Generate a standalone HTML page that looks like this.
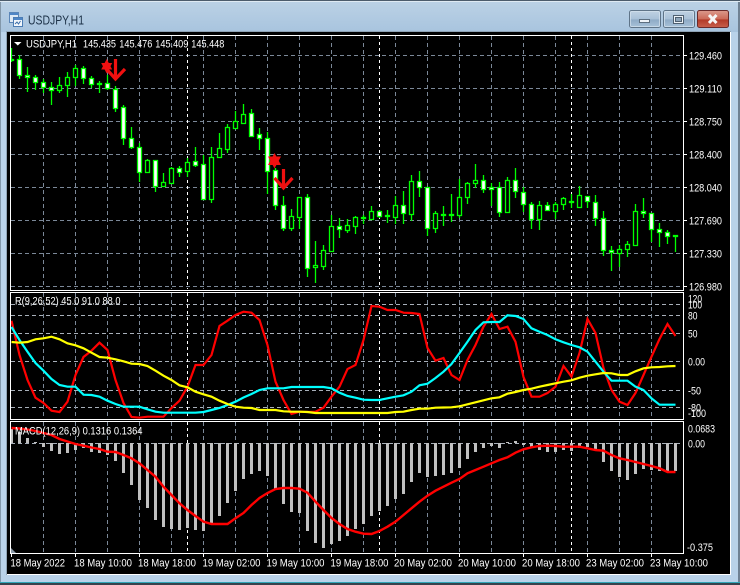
<!DOCTYPE html>
<html lang="en"><head><meta charset="utf-8"><title>USDJPY,H1</title>
<style>
html,body{margin:0;padding:0;background:#fff;width:740px;height:585px;overflow:hidden}
svg{display:block}
text{font-family:"Liberation Sans",sans-serif;font-size:11px;fill:#fff}
.t{font-size:13px;fill:#1c3147}
</style></head><body>
<svg width="740" height="585" viewBox="0 0 740 585" xmlns="http://www.w3.org/2000/svg">
<defs>
<linearGradient id="tb" x1="0" y1="0" x2="0" y2="1"><stop offset="0" stop-color="#bcd2e6"/><stop offset="1" stop-color="#a8c4de"/></linearGradient>
<linearGradient id="btn" x1="0" y1="0" x2="0" y2="1"><stop offset="0" stop-color="#c0d2e3"/><stop offset=".5" stop-color="#a9c1d8"/><stop offset=".55" stop-color="#8fabc6"/><stop offset="1" stop-color="#a9c3da"/></linearGradient>
<linearGradient id="cls" x1="0" y1="0" x2="0" y2="1"><stop offset="0" stop-color="#dc9a8c"/><stop offset=".5" stop-color="#cc6a58"/><stop offset=".55" stop-color="#b23a28"/><stop offset="1" stop-color="#c8604c"/></linearGradient>
</defs>
<rect width="740" height="585" fill="#b9d2e9"/>
<rect width="740" height="32" fill="url(#tb)"/>
<rect width="740" height="1" fill="#4c5c6c"/>
<rect y="1" width="740" height="1" fill="#dfeaf3"/>
<rect x="0" y="582" width="740" height="1" fill="#2fa6b8"/>
<rect x="0" y="583" width="740" height="2" fill="#39424c"/>
<rect x="738" y="2" width="2" height="580" fill="#6f8193"/>
<rect x="0" y="2" width="1" height="580" fill="#8398aa"/>

<!-- title icon -->
<rect x="9.500" y="12.500" width="9" height="10" fill="#dfeaf5" stroke="#5b86b8"/>
<rect x="10" y="13" width="8" height="2" fill="#4f86c6"/>
<rect x="13.500" y="17.500" width="9" height="9" fill="#f2f7fc" stroke="#4b7cb4"/>
<rect x="14" y="18" width="8" height="2" fill="#4f86c6"/>
<path d="M15 24l2-2 1.500 2 2-3" fill="none" stroke="#3b6ea8"/>
<text class="t" x="28" y="24.500" textLength="56" lengthAdjust="spacingAndGlyphs">USDJPY,H1</text>

<!-- buttons -->
<rect x="629.500" y="10.500" width="31" height="17" rx="2" fill="url(#btn)" stroke="#5f7488"/>
<rect x="630.500" y="11.500" width="29" height="15" rx="1" fill="none" stroke="#d6e3ee" stroke-opacity=".7"/>
<rect x="639.500" y="19.500" width="10" height="3" fill="#eef3f8" stroke="#5d6f80"/>
<rect x="663.500" y="10.500" width="31" height="17" rx="2" fill="url(#btn)" stroke="#5f7488"/>
<rect x="664.500" y="11.500" width="29" height="15" rx="1" fill="none" stroke="#d6e3ee" stroke-opacity=".7"/>
<rect x="673.500" y="15.500" width="10" height="8" fill="#eef3f8" stroke="#4f6070"/>
<rect x="675.500" y="17.500" width="6" height="4" fill="#8ea5ba" stroke="#4f6070"/>
<rect x="697.500" y="10.500" width="31" height="17" rx="2" fill="url(#cls)" stroke="#6a2a2a"/>
<path d="M709 15l7.500 8M716.500 15l-7.500 8" stroke="#f5f5f5" stroke-width="3" fill="none"/>

<!-- client area -->
<rect x="6" y="31" width="725" height="544" fill="#8fa3b5"/>
<rect x="7" y="32" width="723" height="542" fill="#000"/>
<rect x="730" y="32" width="1" height="543" fill="#fff"/>
<rect x="7" y="574" width="724" height="1" fill="#fff"/>

<!-- horizontal grids -->
<g fill="none" stroke="#7b8898" stroke-dasharray="4 3">
<path d="M11 55.500H683M11 88.500H683M11 121.500H683M11 154.500H683M11 187.500H683M11 220.500H683M11 253.500H683M11 286.500H683"/>
</g>
<g fill="none" stroke="#a8b0ba" stroke-dasharray="4 3">
<path d="M11 304.500H683M11 315.500H683M11 333.500H683M11 361.500H683M11 390.500H683M11 407.500H683M11 443.500H683"/>
</g>
<!-- vertical grids -->
<g fill="none" stroke="#7b8898" stroke-dasharray="4 3">
<path d="M43.500 36V289M75.500 36V289M107.500 36V289M139.500 36V289M171.500 36V289M203.500 36V289M235.500 36V289M267.500 36V289M299.500 36V289M331.500 36V289M363.500 36V289M395.500 36V289M427.500 36V289M459.500 36V289M491.500 36V289M523.500 36V289M555.500 36V289M587.500 36V289M619.500 36V289M651.500 36V289"/>
<path d="M43.500 293V418M75.500 293V418M107.500 293V418M139.500 293V418M171.500 293V418M203.500 293V418M235.500 293V418M267.500 293V418M299.500 293V418M331.500 293V418M363.500 293V418M395.500 293V418M427.500 293V418M459.500 293V418M491.500 293V418M523.500 293V418M555.500 293V418M587.500 293V418M619.500 293V418M651.500 293V418"/>
<path d="M43.500 422V552M75.500 422V552M107.500 422V552M139.500 422V552M171.500 422V552M203.500 422V552M235.500 422V552M267.500 422V552M299.500 422V552M331.500 422V552M363.500 422V552M395.500 422V552M427.500 422V552M459.500 422V552M491.500 422V552M523.500 422V552M555.500 422V552M587.500 422V552M619.500 422V552M651.500 422V552"/>
</g>
<g fill="none" stroke="#fff" stroke-dasharray="3 3">
<path d="M187.500 36V289M379.500 36V289M571.500 36V289M187.500 293V418M379.500 293V418M571.500 293V418M187.500 422V552M379.500 422V552M571.500 422V552"/>
</g>

<!-- wicks -->
<path fill="none" stroke="#00ff00" stroke-width="1.300" d="M11.500 48V62M19.500 55V79M27.500 67V92M35.500 75V90M43.500 79V93M51.500 82V105M59.500 77V93M67.500 72V97M75.500 65V86M83.500 66V84M91.500 76V88M99.500 81V93M107.500 75V90M115.500 86V112M123.500 105V145M131.500 127V149M139.500 143V182M147.500 159V172M155.500 160V192M163.500 173V186M171.500 167V183M179.500 166V177M187.500 158V177M195.500 147V167M203.500 155V200M211.500 147V203M219.500 133V158M227.500 124V153M235.500 111V128M243.500 104V124M251.500 109V137M259.500 128V150M267.500 132V194M275.500 168V210M283.500 196V231M291.500 209V231M299.500 197V229M307.500 194V277M315.500 241V283M323.500 245V270M331.500 215V251M339.500 218V238M347.500 219V233M355.500 216V234M363.500 215V224M371.500 206V219M379.500 210V218M387.500 210V223M395.500 196V224M403.500 191V224M411.500 175V221M419.500 171V197M427.500 187V236M435.500 211V233M443.500 206V226M451.500 194V222M459.500 179V218M467.500 182V204M475.500 164V188M483.500 175V193M491.500 183V206M499.500 182V217M507.500 177V213M515.500 168V198M523.500 187V212M531.500 202V229M539.500 201V230M547.500 202V211M555.500 202V219M563.500 197V210M571.500 194V208M579.500 186V207M587.500 196V208M595.500 195V226M603.500 211V256M611.500 246V271M619.500 245V267M627.500 241V257M635.500 204V246M643.500 198V218M651.500 213V242M659.500 223V247M667.500 230V244M675.500 235V252"/>
<!-- bull bodies -->
<path fill="#000" stroke="#00ff00" stroke-width="1.300" d="M57.500 85.500h4v5h-4zM65.500 77.500h4v8h-4zM73.500 68.500h4v9h-4zM145.500 160.500h4v12h-4zM161.500 182.500h4v4h-4zM169.500 168.500h4v15h-4zM185.500 162.500h4v9h-4zM209.500 157.500h4v42h-4zM217.500 148.500h4v9h-4zM225.500 127.500h4v22h-4zM233.500 121.500h4v7h-4zM241.500 114.500h4v9h-4zM289.500 216.500h4v12h-4zM297.500 197.500h4v20h-4zM313.500 265.500h4v2h-4zM321.500 250.500h4v16h-4zM329.500 226.500h4v25h-4zM345.500 225.500h4v5h-4zM353.500 217.500h4v9h-4zM369.500 211.500h4v8h-4zM393.500 205.500h4v12h-4zM409.500 181.500h4v33h-4zM433.500 213.500h4v15h-4zM457.500 197.500h4v18h-4zM465.500 183.500h4v14h-4zM473.500 180.500h4v3h-4zM505.500 180.500h4v32h-4zM537.500 205.500h4v14h-4zM553.500 204.500h4v7h-4zM561.500 198.500h4v6h-4zM577.500 195.500h4v12h-4zM617.500 249.500h4v4h-4zM625.500 244.500h4v5h-4zM633.500 211.500h4v34h-4z"/>
<!-- bear bodies -->
<path fill="#fff" stroke="#00ff00" stroke-width="1.300" d="M11.500 59.500h2v1h-2zM17.500 59.500h4v16h-4zM25.500 75.500h4v2h-4zM33.500 77.500h4v5h-4zM41.500 82.500h4v5h-4zM49.500 87.500h4v3h-4zM81.500 68.500h4v10h-4zM89.500 78.500h4v6h-4zM97.500 83.500h4v1h-4zM105.500 83.500h4v5h-4zM113.500 89.500h4v19h-4zM121.500 107.500h4v31h-4zM129.500 138.500h4v9h-4zM137.500 147.500h4v25h-4zM153.500 160.500h4v26h-4zM177.500 168.500h4v4h-4zM193.500 161.500h4v4h-4zM201.500 164.500h4v35h-4zM249.500 113.500h4v23h-4zM257.500 134.500h4v4h-4zM265.500 138.500h4v33h-4zM273.500 170.500h4v35h-4zM281.500 205.500h4v23h-4zM305.500 197.500h4v71h-4zM337.500 226.500h4v3h-4zM361.500 217.500h4v1h-4zM377.500 211.500h4v5h-4zM385.500 215.500h4v1h-4zM401.500 205.500h4v8h-4zM417.500 181.500h4v6h-4zM425.500 187.500h4v41h-4zM441.500 214.500h4v1h-4zM449.500 214.500h4v1h-4zM481.500 180.500h4v9h-4zM489.500 187.500h4v2h-4zM497.500 187.500h4v25h-4zM513.500 180.500h4v11h-4zM521.500 192.500h4v12h-4zM529.500 204.500h4v15h-4zM545.500 205.500h4v5h-4zM569.500 201.500h4v1h-4zM585.500 196.500h4v5h-4zM593.500 202.500h4v16h-4zM601.500 218.500h4v32h-4zM609.500 250.500h4v2h-4zM641.500 211.500h4v2h-4zM649.500 213.500h4v16h-4zM657.500 229.500h4v3h-4zM665.500 232.500h4v4h-4zM673.500 235.500h4v1h-4z"/>

<!-- red markers -->
<g fill="#f01010">
<polygon points="106.700,59 112.200,69.500 101.200,69.500"/><polygon points="106.700,73.500 112.200,63 101.200,63"/>
<polygon points="274.500,153 281,165 268,165"/><polygon points="274.500,168.500 281,156.500 268,156.500"/>
</g>
<g fill="none" stroke="#f01010" stroke-width="3.200">
<path d="M115.500 59V79M106.500 69L115.500 79L125 69"/>
<path d="M283.500 169V188M274.500 178L283.500 188L292.500 178"/>
</g>

<!-- histogram -->
<path fill="none" stroke="#c0c0c0" stroke-width="3" d="M11.500 443V429M19.500 443V432M27.500 443V438M35.500 443V442M43.500 443V447M51.500 443V451M59.500 443V454M67.500 443V453M75.500 443V450M83.500 443V448M91.500 443V452M99.500 443V453M107.500 443V455M115.500 443V461M123.500 443V473M131.500 443V485M139.500 443V500M147.500 443V508M155.500 443V520M163.500 443V527M171.500 443V529M179.500 443V530M187.500 443V528M195.500 443V530M203.500 443V531M211.500 443V524M219.500 443V516M227.500 443V503M235.500 443V491M243.500 443V479M251.500 443V474M259.500 443V471M267.500 443V476M275.500 443V489M283.500 443V504M291.500 443V512M299.500 443V513M307.500 443V531M315.500 443V543M323.500 443V548M331.500 443V544M339.500 443V541M347.500 443V536M355.500 443V529M363.500 443V524M371.500 443V516M379.500 443V511M387.500 443V506M395.500 443V499M403.500 443V494M411.500 443V482M419.500 443V473M427.500 443V477M435.500 443V476M443.500 443V475M451.500 443V473M459.500 443V468M467.500 443V459M475.500 443V452M483.500 443V448M491.500 443V446M499.500 443V448M507.500 443V442M515.500 443V441M523.500 443V445M531.500 443V447M539.500 443V450M547.500 443V452M555.500 443V452M563.500 443V450M571.500 443V451M579.500 443V448M587.500 443V447M595.500 443V450M603.500 443V462M611.500 443V471M619.500 443V477M627.500 443V480M635.500 443V474M643.500 443V469M651.500 443V470M659.500 443V471M667.500 443V472M675.500 443V471"/>
<polygon points="11,548 11,553 16,553" fill="#8a99a8"/>

<!-- signal line -->
<polyline fill="none" stroke="#ff0000" stroke-width="2.400" points="11.500,428 19.500,428.500 27.500,429.500 35.500,431 43.500,433 51.500,435 59.500,439 67.500,441.500 75.500,444 83.500,445.700 91.500,447.500 99.500,449 107.500,451.700 115.500,452 123.500,455 131.500,458.300 139.500,463.300 147.500,470 155.500,476.700 163.500,486.700 171.500,495 179.500,503.300 187.500,510 195.500,516 203.500,521.700 211.500,524 219.500,524 227.500,524 235.500,518.300 243.500,513 251.500,505 259.500,498 267.500,493 275.500,489 283.500,488 291.500,488 299.500,488.700 307.500,492.700 315.500,501.700 323.500,510 331.500,518 339.500,524 347.500,529 355.500,531.700 363.500,533.700 371.500,534 379.500,531 387.500,526.700 395.500,521.700 403.500,515 411.500,508.300 419.500,501.700 427.500,495.700 435.500,490.700 443.500,486.700 451.500,482.700 459.500,479 467.500,473.300 475.500,470 483.500,466.700 491.500,463.300 499.500,460 507.500,457.300 515.500,452.700 523.500,449.300 531.500,447.300 539.500,446 547.500,445.700 555.500,446 563.500,446.700 571.500,446.700 579.500,446.700 587.500,448.300 595.500,450 603.500,450.700 611.500,455 619.500,458.300 627.500,460 635.500,462 643.500,464 651.500,466 659.500,468.300 667.500,472 675.500,472"/>

<!-- indicator lines -->
<polyline fill="none" stroke="#ff0000" stroke-width="2.200" points="11.500,320.700 19.500,355 27.500,380 35.500,397.700 43.500,403 51.500,410.700 59.500,412 67.500,401.700 75.500,375 83.500,357 91.500,350.700 99.500,342.700 107.500,350 115.500,380 123.500,403 131.500,417 139.500,417.700 147.500,416.700 155.500,416.700 163.500,416.700 171.500,408 179.500,400.700 187.500,386.700 195.500,365 203.500,365 211.500,355 219.500,326 227.500,320.700 235.500,315 243.500,311.700 251.500,312.700 259.500,320 267.500,345 275.500,381.700 283.500,400 291.500,414 299.500,411.700 307.500,412 315.500,411.700 323.500,407.700 331.500,396.700 339.500,386.700 347.500,369 355.500,365 363.500,340 371.500,306 379.500,306.700 387.500,310 395.500,310 403.500,312.700 411.500,313 419.500,314 427.500,348 435.500,360.700 443.500,358 451.500,375 459.500,380 467.500,360 475.500,345 483.500,326.700 491.500,314 499.500,329 507.500,326.700 515.500,341.700 523.500,377 531.500,396.700 539.500,396.700 547.500,393 555.500,386.700 563.500,366 571.500,376.700 579.500,353 587.500,319 595.500,333 603.500,368 611.500,390 619.500,401.700 627.500,405 635.500,393 643.500,375 651.500,356.700 659.500,339 667.500,324 675.500,336"/>
<polyline fill="none" stroke="#00ffff" stroke-width="2.200" points="11.500,327 19.500,340 27.500,351.700 35.500,363 43.500,370.700 51.500,379 59.500,385 67.500,386.700 75.500,386.700 83.500,394.700 91.500,395 99.500,396.700 107.500,400.700 115.500,404 123.500,406.700 131.500,406.700 139.500,406.700 147.500,409.300 155.500,411.700 163.500,412.700 171.500,412.700 179.500,412.700 187.500,412.700 195.500,412.700 203.500,412 211.500,410 219.500,408 227.500,405 235.500,401.700 243.500,397.500 251.500,394 259.500,390 267.500,388.300 275.500,388.300 283.500,388.300 291.500,387 299.500,387 307.500,387 315.500,387 323.500,387 331.500,388.300 339.500,392.700 347.500,396 355.500,397.700 363.500,399.700 371.500,400 379.500,400 387.500,398.300 395.500,396.700 403.500,395.300 411.500,391.700 419.500,385.300 427.500,383.700 435.500,378 443.500,371.700 451.500,364 459.500,353 467.500,341.700 475.500,330 483.500,322.300 491.500,322 499.500,322 507.500,315.300 515.500,316 523.500,319 531.500,328.300 539.500,331.700 547.500,335 555.500,339.300 563.500,342.300 571.500,345 579.500,347.300 587.500,351.700 595.500,361.700 603.500,371.700 611.500,380.700 619.500,380.700 627.500,380.700 635.500,386.700 643.500,390 651.500,398.300 659.500,404.700 667.500,404.700 675.500,404.700"/>
<polyline fill="none" stroke="#ffff00" stroke-width="2.200" points="11.500,342 19.500,342.700 27.500,342 35.500,339.300 43.500,338.300 51.500,336.700 59.500,339.300 67.500,343.300 75.500,345.300 83.500,348.300 91.500,352.700 99.500,357 107.500,357.700 115.500,359.300 123.500,361.300 131.500,363.700 139.500,364 147.500,366 155.500,370.700 163.500,375.700 171.500,380 179.500,385.300 187.500,387.300 195.500,391.700 203.500,394.300 211.500,396.700 219.500,400.700 227.500,404 235.500,406.700 243.500,407.700 251.500,408 259.500,410 267.500,410 275.500,410 283.500,411.300 291.500,411.700 299.500,411.700 307.500,412 315.500,413 323.500,413 331.500,413 339.500,413 347.500,413 355.500,413 363.500,413 371.500,413 379.500,413 387.500,413 395.500,412 403.500,411.700 411.500,410 419.500,408.700 427.500,408.700 435.500,407.700 443.500,407.500 451.500,407.300 459.500,406.300 467.500,404.300 475.500,402.300 483.500,400.300 491.500,398.300 499.500,397.300 507.500,393.700 515.500,392 523.500,390 531.500,388.700 539.500,386.700 547.500,385 555.500,383.300 563.500,381.700 571.500,380.300 579.500,377.700 587.500,375.700 595.500,374.300 603.500,373 611.500,373.300 619.500,375 627.500,375 635.500,371.300 643.500,368.300 651.500,367.300 659.500,367 667.500,366.300 675.500,366"/>

<!-- cover overshoot outside panels -->
<rect x="8" y="36" width="3" height="517" fill="#000"/>

<!-- frames -->
<g fill="none" stroke="#fff">
<rect x="10.500" y="35.500" width="673" height="255"/>
<rect x="10.500" y="292.500" width="673" height="127"/>
<rect x="10.500" y="421.500" width="673" height="132"/>
<path d="M683 55.500h4M683 88.500h4M683 121.500h4M683 154.500h4M683 187.500h4M683 220.500h4M683 253.500h4M683 286.500h4"/>
<path d="M11.500 553v4M75.500 553v4M139.500 553v4M203.500 553v4M267.500 553v4M331.500 553v4M395.500 553v4M459.500 553v4M523.500 553v4M587.500 553v4M651.500 553v4"/>
</g>

<!-- header text -->
<polygon points="14,42 21.500,42 17.800,45.500" fill="#fff"/>
<text x="26" y="47.500" textLength="51" lengthAdjust="spacingAndGlyphs">USDJPY,H1</text>
<text x="83" y="47.500" textLength="33" lengthAdjust="spacingAndGlyphs">145.435</text>
<text x="119.300" y="47.500" textLength="33" lengthAdjust="spacingAndGlyphs">145.476</text>
<text x="155.300" y="47.500" textLength="33" lengthAdjust="spacingAndGlyphs">145.409</text>
<text x="191.300" y="47.500" textLength="33" lengthAdjust="spacingAndGlyphs">145.448</text>
<text x="15" y="304.500" textLength="105.500" lengthAdjust="spacingAndGlyphs">R(9,26,52) 45.0 91.0 88.0</text>
<text x="15" y="434.500" textLength="127.500" lengthAdjust="spacingAndGlyphs">MACD(12,26,9) 0.1316 0.1364</text>

<!-- price axis -->
<text x="689" y="59.500" textLength="33" lengthAdjust="spacingAndGlyphs">129.460</text>
<text x="689" y="92.500" textLength="33" lengthAdjust="spacingAndGlyphs">129.110</text>
<text x="689" y="125.500" textLength="33" lengthAdjust="spacingAndGlyphs">128.750</text>
<text x="689" y="158.500" textLength="33" lengthAdjust="spacingAndGlyphs">128.400</text>
<text x="689" y="191.500" textLength="33" lengthAdjust="spacingAndGlyphs">128.040</text>
<text x="689" y="224.500" textLength="33" lengthAdjust="spacingAndGlyphs">127.690</text>
<text x="689" y="257.500" textLength="33" lengthAdjust="spacingAndGlyphs">127.330</text>
<text x="689" y="290.500" textLength="33" lengthAdjust="spacingAndGlyphs">126.980</text>
<text x="688" y="302.500" textLength="14" lengthAdjust="spacingAndGlyphs">120</text>
<text x="688" y="308.500" textLength="14" lengthAdjust="spacingAndGlyphs">100</text>
<text x="688" y="319.500" textLength="9.500" lengthAdjust="spacingAndGlyphs">80</text>
<text x="688" y="337.500" textLength="9.500" lengthAdjust="spacingAndGlyphs">50</text>
<text x="688" y="365.500" textLength="17" lengthAdjust="spacingAndGlyphs">0.00</text>
<text x="688" y="394.500" textLength="13" lengthAdjust="spacingAndGlyphs">-50</text>
<text x="688" y="411.500" textLength="13" lengthAdjust="spacingAndGlyphs">-80</text>
<text x="688" y="417" textLength="18" lengthAdjust="spacingAndGlyphs">-100</text>
<text x="688" y="432.500" textLength="27" lengthAdjust="spacingAndGlyphs">0.0683</text>
<text x="688" y="447.500" textLength="17" lengthAdjust="spacingAndGlyphs">0.00</text>
<text x="687" y="551" textLength="26" lengthAdjust="spacingAndGlyphs">-0.375</text>

<!-- time axis -->
<text x="10.500" y="566.500" textLength="54.500" lengthAdjust="spacingAndGlyphs">18 May 2022</text>
<text x="74" y="566.500" textLength="58" lengthAdjust="spacingAndGlyphs">18 May 10:00</text>
<text x="138" y="566.500" textLength="58" lengthAdjust="spacingAndGlyphs">18 May 18:00</text>
<text x="202.500" y="566.500" textLength="58" lengthAdjust="spacingAndGlyphs">19 May 02:00</text>
<text x="266.500" y="566.500" textLength="58" lengthAdjust="spacingAndGlyphs">19 May 10:00</text>
<text x="330.500" y="566.500" textLength="58" lengthAdjust="spacingAndGlyphs">19 May 18:00</text>
<text x="394" y="566.500" textLength="58" lengthAdjust="spacingAndGlyphs">20 May 02:00</text>
<text x="458" y="566.500" textLength="58" lengthAdjust="spacingAndGlyphs">20 May 10:00</text>
<text x="522" y="566.500" textLength="58" lengthAdjust="spacingAndGlyphs">20 May 18:00</text>
<text x="586" y="566.500" textLength="58" lengthAdjust="spacingAndGlyphs">23 May 02:00</text>
<text x="650" y="566.500" textLength="58" lengthAdjust="spacingAndGlyphs">23 May 10:00</text>
</svg>
</body></html>
